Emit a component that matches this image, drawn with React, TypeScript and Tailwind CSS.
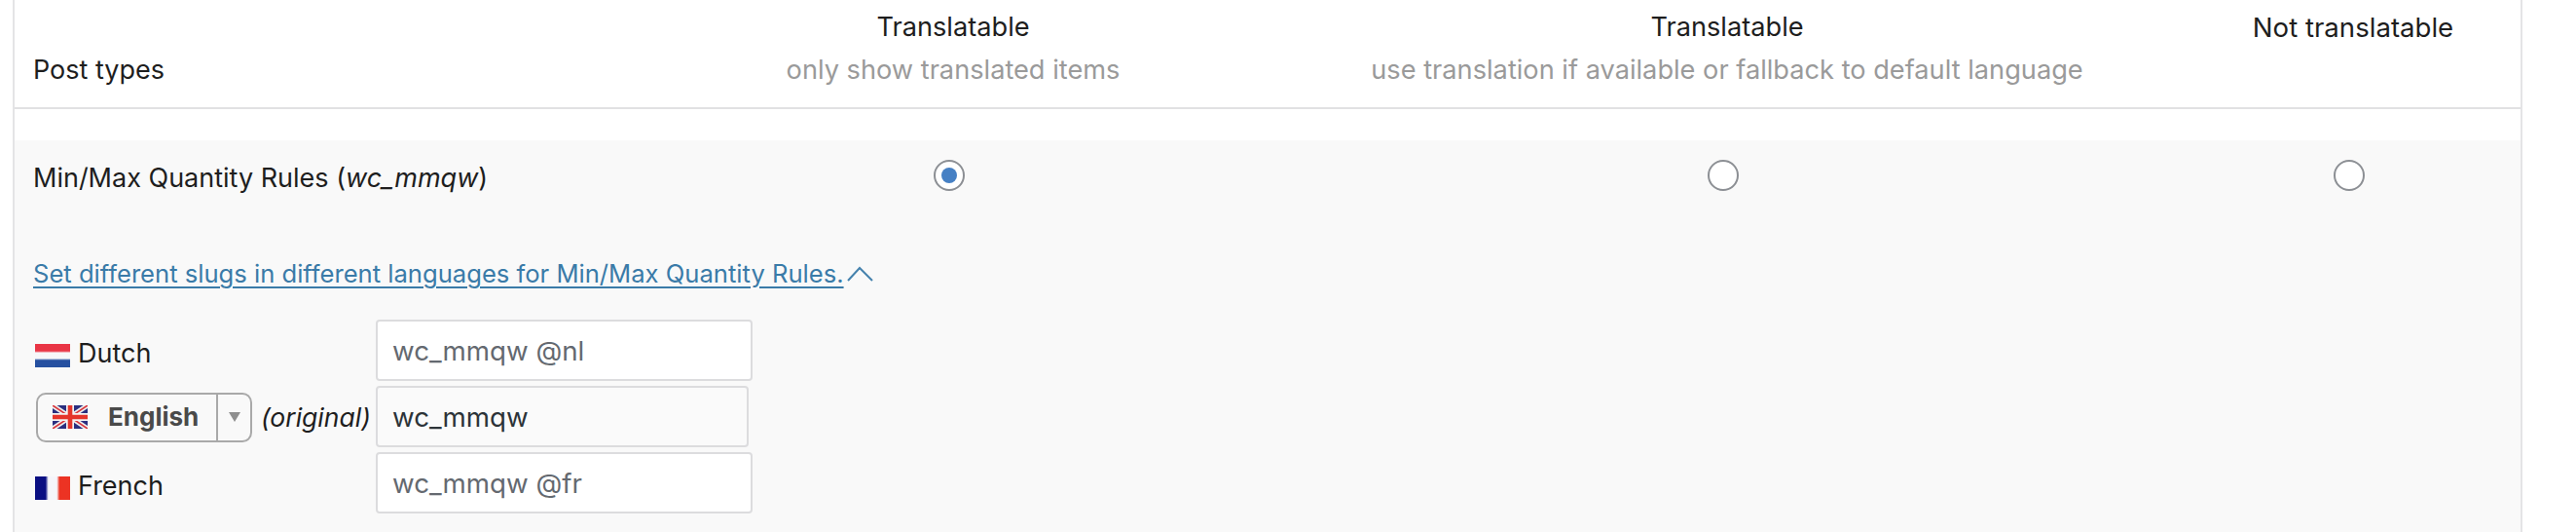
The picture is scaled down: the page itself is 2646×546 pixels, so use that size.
const fontStack = { fontFamily: "Inter, 'Liberation Sans', sans-serif" };

const DutchFlag: React.FC = () => (
  <svg width="36" height="24" viewBox="0 0 36 24" className="mt-[5px] shrink-0">
    <defs>
      <linearGradient id="nl" x1="0" y1="0" x2="0" y2="1">
        <stop offset="0" stopColor="#e93545" />
        <stop offset="0.3" stopColor="#e93545" />
        <stop offset="0.38" stopColor="#f7f7f9" />
        <stop offset="0.62" stopColor="#f7f7f9" />
        <stop offset="0.7" stopColor="#2650a0" />
        <stop offset="1" stopColor="#2650a0" />
      </linearGradient>
    </defs>
    <rect width="36" height="24" fill="url(#nl)" />
  </svg>
);

const FrenchFlag: React.FC = () => (
  <svg width="36" height="24" viewBox="0 0 36 24" className="mt-[4px] shrink-0">
    <defs>
      <linearGradient id="fr" x1="0" y1="0" x2="1" y2="0">
        <stop offset="0" stopColor="#0a0f82" />
        <stop offset="0.3" stopColor="#0a0f82" />
        <stop offset="0.38" stopColor="#f5f5fa" />
        <stop offset="0.62" stopColor="#f5f5fa" />
        <stop offset="0.7" stopColor="#ec3323" />
        <stop offset="1" stopColor="#ec3323" />
      </linearGradient>
    </defs>
    <rect width="36" height="24" fill="url(#fr)" />
  </svg>
);

const UkFlag: React.FC = () => (
  <svg width="36" height="24" viewBox="0 0 36 24" className="shrink-0">
    <rect width="36" height="24" fill="#2b2f7f" />
    <path d="M0 0L36 24M36 0L0 24" stroke="#eee" strokeWidth="5" />
    <path d="M0 0L36 24M36 0L0 24" stroke="#d9343a" strokeWidth="1.6" />
    <path d="M18 0V24M0 12H36" stroke="#f3f3f3" strokeWidth="8" />
    <path d="M18 0V24M0 12H36" stroke="#e5352b" strokeWidth="4.6" />
  </svg>
);

const Radio: React.FC<{ checked?: boolean }> = ({ checked }) => (
  <span className="mr-2 flex h-[32px] w-[32px] items-center justify-center rounded-full border-2 border-[#8c8f94] bg-white">
    {checked && <span className="h-[16px] w-[16px] rounded-full bg-[#4680c4]" />}
  </span>
);

const SlugInput: React.FC<{ value: string; original?: boolean }> = ({ value, original }) => (
  <div
    className={
      original
        ? "flex h-[63px] w-[383px] items-center rounded-[4px] border-2 border-[#dcdcde] bg-[#fafafa] px-[15px] text-[27.7px] text-[#2c3338]"
        : "flex h-[63px] w-[387px] items-center rounded-[4px] border-2 border-[#dcdcde] bg-white px-[15px] text-[27.7px] text-[#646970]"
    }
  >
    {value}
  </div>
);

const App: React.FC = () => {
  return (
    <div
      className="h-[546px] w-[2646px] overflow-hidden bg-white text-[27px] leading-[44px] text-[#1e1e1e]"
      style={fontStack}
    >
      <div className="ml-[13px] h-full w-[2578px] border-x-2 border-[#e4e4e6]">
        <div className="grid grid-cols-[640px_648px_942px_344px] border-b-2 border-[#e1e1e3] pt-[6px] pb-[16px] text-center text-[27.2px]">
          <div className="self-end pl-[19px] text-left text-[27px]">Post types</div>
          <div>
            <div>Translatable</div>
            <div className="text-[#9a9a9a]">only show translated items</div>
          </div>
          <div>
            <div>Translatable</div>
            <div className="text-[#9a9a9a]">use translation if available or fallback to default language</div>
          </div>
          <div className="text-[27.6px]">Not translatable</div>
        </div>

        <div className="mt-[32px] h-full bg-[#f9f9f9] pl-[19px]">
          <div className="-ml-[19px] grid h-[72px] grid-cols-[640px_648px_942px_344px] items-center">
            <div className="pt-[5px] pl-[19px]">
              Min/Max Quantity Rules (<em>wc_mmqw</em>)
            </div>
            <div className="flex justify-center">
              <Radio checked />
            </div>
            <div className="flex justify-center">
              <Radio />
            </div>
            <div className="flex justify-center">
              <Radio />
            </div>
          </div>

          <div className="mt-[43px] flex items-center">
            <a className="text-[25.6px] text-[#3a7ba8] underline underline-offset-[4px]">
              Set different slugs in different languages for Min/Max Quantity Rules.
            </a>
            <svg width="30" height="18" viewBox="0 0 30 18" className="ml-[2px]" fill="none" stroke="#4582ad" strokeWidth="2">
              <path d="M2 16L14 3L27 16" />
            </svg>
          </div>

          <div className="mt-[25px] flex flex-col gap-[5px]">
            <div className="flex items-center">
              <div className="flex w-[352px] items-center gap-[8px] pt-[6px] pl-[2px]">
                <DutchFlag />
                <span>Dutch</span>
              </div>
              <SlugInput value="wc_mmqw @nl" />
            </div>
            <div className="flex items-center">
              <div className="flex w-[352px] items-center pt-[1px]">
                <div className="ml-[3px] flex h-[51px] w-[222px] items-center rounded-[10px] border-2 border-[#a9a9a9]">
                  <div className="flex flex-1 items-center gap-[21px] pl-[15px] text-[26px] font-bold text-[#4a4a4a]">
                    <UkFlag />
                    <span>English</span>
                  </div>
                  <div className="flex h-full w-[35px] items-center justify-center border-l-2 border-[#a9a9a9]">
                    <span className="h-0 w-0 border-x-[6px] border-t-[10px] border-x-transparent border-t-[#8f8f8f]" />
                  </div>
                </div>
                <em className="ml-[9px] text-[26.5px] whitespace-nowrap">(original)</em>
              </div>
              <SlugInput value="wc_mmqw" original />
            </div>
            <div className="flex items-center">
              <div className="flex w-[352px] items-center gap-[8px] pt-[7px] pl-[2px]">
                <FrenchFlag />
                <span>French</span>
              </div>
              <SlugInput value="wc_mmqw @fr" />
            </div>
          </div>
        </div>
      </div>
    </div>
  );
};

export default App;
